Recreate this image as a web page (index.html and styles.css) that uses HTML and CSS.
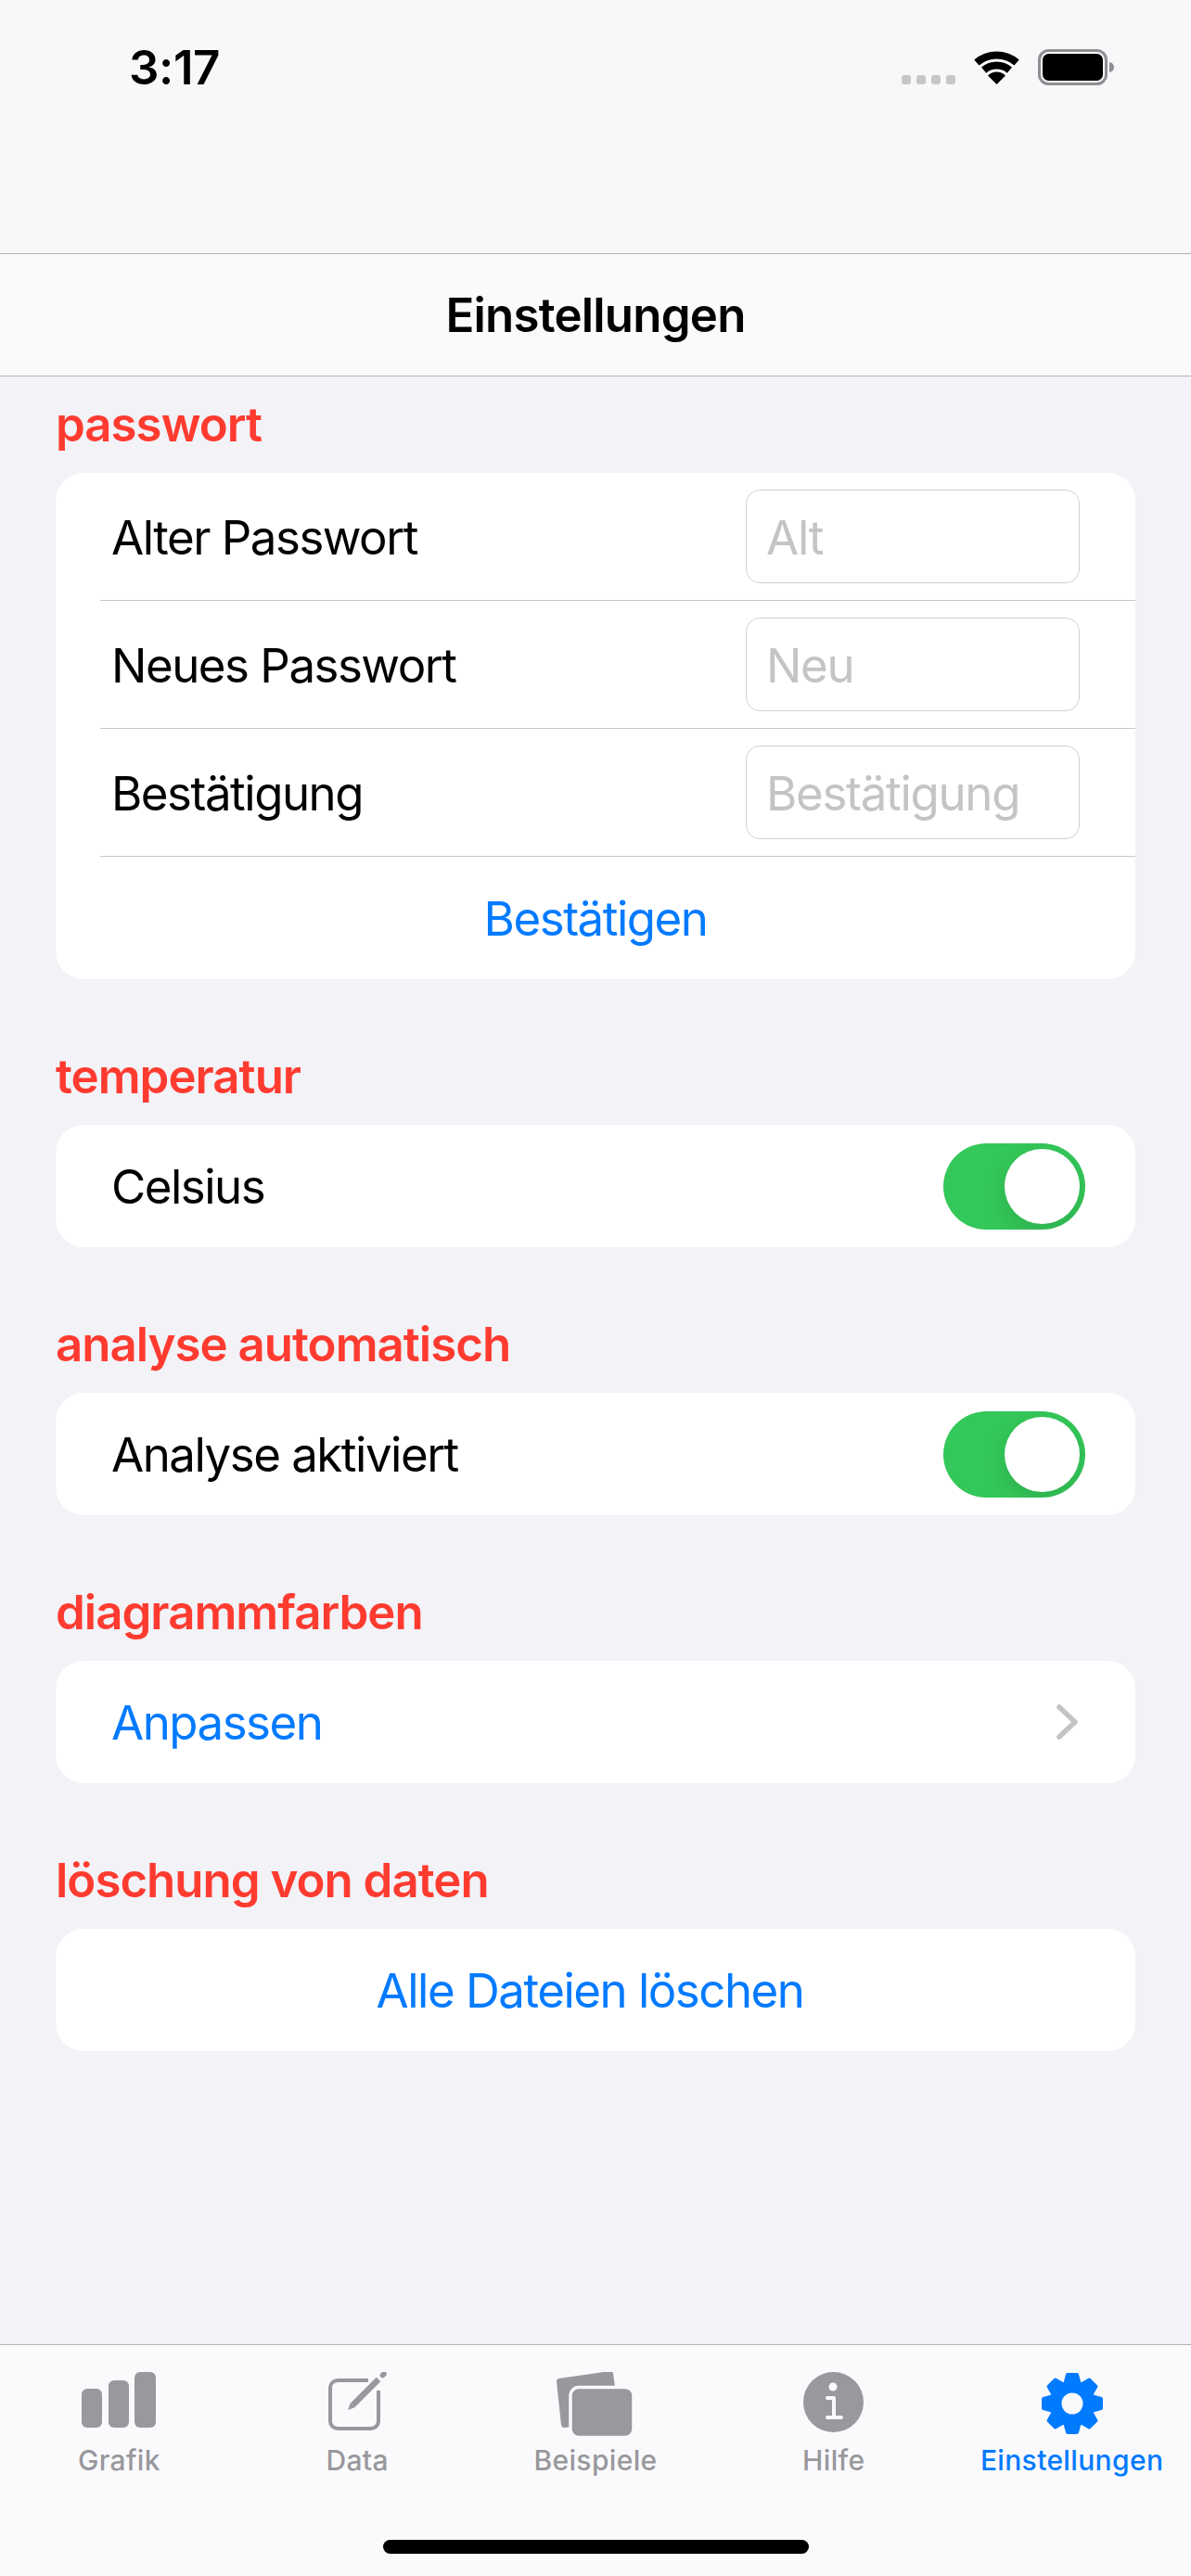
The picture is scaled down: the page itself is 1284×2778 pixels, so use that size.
FILE: index.html
```html
<!DOCTYPE html>
<html lang="de">

<head>
    <meta charset="UTF-8">
    <meta name="viewport" content="width=device-width, initial-scale=1.0">
    <title>Einstellungen</title>
    <link rel="stylesheet" href="styles.css">
</head>

<body>
    <div class="status-bar">
        <span class="time">3:17</span>
        <div class="status-icons">
            <div class="signal"><i></i><i></i><i></i><i></i></div>
            <svg class="wifi" width="51" height="37" viewBox="0 0 51 37">
                <path d="M3.9 13.6A33 33 0 0 1 47.1 13.6" fill="none" stroke="#000" stroke-width="8" />
                <path d="M11.6 21.6A21.5 21.5 0 0 1 39.4 21.6" fill="none" stroke="#000" stroke-width="8" />
                <path d="M25.5 37L16 27.5A13.5 13.5 0 0 1 35 27.5Z" fill="#000" />
            </svg>
            <svg class="battery" width="83" height="39" viewBox="0 0 83 39">
                <rect x="1.5" y="1.5" width="72" height="36" rx="10" fill="none" stroke="#8e8e93" stroke-width="3" />
                <rect x="5" y="5" width="65" height="29" rx="6.5" fill="#000" />
                <path d="M77 14C80 14.500 82 16.500 82 19.500C82 22.500 80 24.500 77 25Z" fill="#8e8e93" />
            </svg>
        </div>
    </div>

    <div class="nav-bar">Einstellungen</div>

    <main class="content">
        <section class="group">
            <h2>passwort</h2>
            <div class="card">
                <div class="row row-input">
                    <span>Alter Passwort</span>
                    <div class="field">Alt</div>
                </div>
                <div class="row row-input">
                    <span>Neues Passwort</span>
                    <div class="field">Neu</div>
                </div>
                <div class="row row-input">
                    <span>Bestätigung</span>
                    <div class="field">Bestätigung</div>
                </div>
                <div class="row row-center link">Bestätigen</div>
            </div>
        </section>

        <section class="group">
            <h2>temperatur</h2>
            <div class="card">
                <div class="row">
                    <span>Celsius</span>
                    <div class="toggle"><div class="knob"></div></div>
                </div>
            </div>
        </section>

        <section class="group">
            <h2>analyse automatisch</h2>
            <div class="card">
                <div class="row">
                    <span>Analyse aktiviert</span>
                    <div class="toggle"><div class="knob"></div></div>
                </div>
            </div>
        </section>

        <section class="group">
            <h2>diagrammfarben</h2>
            <div class="card">
                <div class="row link">
                    <span>Anpassen</span>
                    <svg class="chevron" width="23" height="38" viewBox="0 0 23 38">
                        <path d="M3 3L20 19L3 35" fill="none" stroke="#c4c4c6" stroke-width="5.500" stroke-linecap="round" stroke-linejoin="round" />
                    </svg>
                </div>
            </div>
        </section>

        <section class="group">
            <h2>löschung von daten</h2>
            <div class="card">
                <div class="row row-center row-offset link">Alle Dateien löschen</div>
            </div>
        </section>
    </main>

    <footer class="tab-bar">
        <nav class="tabs">
            <div class="tab">
                <div class="tab-icon">
                    <svg width="80" height="60" viewBox="0 0 80 60" fill="#98989d">
                        <rect x="0" y="18" width="22" height="42" rx="6" />
                        <rect x="29" y="9" width="22" height="51" rx="6" />
                        <rect x="57" y="0" width="23" height="60" rx="6" />
                    </svg>
                </div>
                <span>Grafik</span>
            </div>
            <div class="tab">
                <div class="tab-icon">
                    <svg width="63" height="63" viewBox="0 0 63 63">
                        <path d="M43 9H10A8 8 0 0 0 2 17V53A8 8 0 0 0 10 61H46A8 8 0 0 0 54 53V20" fill="none" stroke="#98989d" stroke-width="4" />
                        <path d="M21 41L24 33L29 38Z" fill="#98989d" />
                        <path d="M26.500 35.500L54 8" fill="none" stroke="#98989d" stroke-width="6.500" />
                        <path d="M58.500 3.500L60 2" fill="none" stroke="#98989d" stroke-width="5.500" stroke-linecap="round" />
                    </svg>
                </div>
                <span>Data</span>
            </div>
            <div class="tab">
                <div class="tab-icon">
                    <svg class="tab-icon-stack" width="84" height="70" viewBox="0 0 84 70">
                        <path d="M4 10L59 2L66 50L9 57Z" fill="#98989d" stroke="#98989d" stroke-width="6" stroke-linejoin="round" />
                        <rect x="16" y="16.500" width="68" height="54" rx="9" fill="#98989d" stroke="#fafafc" stroke-width="3.500" />
                    </svg>
                </div>
                <span>Beispiele</span>
            </div>
            <div class="tab">
                <div class="tab-icon">
                    <svg width="65" height="65" viewBox="0 0 65 65">
                        <circle cx="32.500" cy="32.500" r="32.500" fill="#98989d" />
                        <circle cx="32" cy="16" r="4.500" fill="#fafafc" />
                        <path d="M26 28H33V49M26 49H41" fill="none" stroke="#fafafc" stroke-width="4" stroke-linecap="round" stroke-linejoin="round" />
                    </svg>
                </div>
                <span>Hilfe</span>
            </div>
            <div class="tab active">
                <div class="tab-icon">
                    <svg width="68" height="68" viewBox="0 0 68 68" fill="#007aff">
                        <g stroke="#007aff" stroke-width="4" stroke-linejoin="round">
                            <path d="M29 3H39L42 14H26Z" />
                            <path d="M29 3H39L42 14H26Z" transform="rotate(45 34 34)" />
                            <path d="M29 3H39L42 14H26Z" transform="rotate(90 34 34)" />
                            <path d="M29 3H39L42 14H26Z" transform="rotate(135 34 34)" />
                            <path d="M29 3H39L42 14H26Z" transform="rotate(180 34 34)" />
                            <path d="M29 3H39L42 14H26Z" transform="rotate(225 34 34)" />
                            <path d="M29 3H39L42 14H26Z" transform="rotate(270 34 34)" />
                            <path d="M29 3H39L42 14H26Z" transform="rotate(315 34 34)" />
                        </g>
                        <circle cx="34" cy="34" r="25" />
                        <circle cx="34" cy="34" r="11.500" fill="#fafafc" />
                    </svg>
                </div>
                <span>Einstellungen</span>
            </div>
        </nav>
        <div class="home-indicator"></div>
    </footer>
</body>

</html>
```

FILE: styles.css
```css
* {
    box-sizing: border-box;
}

body {
    margin: 0;
    width: 1284px;
    height: 2778px;
    display: flex;
    flex-direction: column;
    background-color: #f2f2f7;
    color: #000;
    font-family: Inter, "Liberation Sans", sans-serif;
    font-size: 51px;
    letter-spacing: -1.5px;
}

.status-bar {
    height: 273px;
    flex: none;
    display: flex;
    justify-content: space-between;
    align-items: flex-start;
    padding: 53px 82px 0 139px;
    background-color: #f8f8fa;
}

.time {
    font-weight: 600;
    letter-spacing: -0.4px;
    line-height: 39px;
}

.status-icons {
    display: flex;
    align-items: flex-end;
}

.signal {
    display: flex;
    gap: 6px;
    margin-right: 19px;
    margin-bottom: 1px;
}

.signal i {
    width: 10px;
    height: 10px;
    border-radius: 3px;
    background-color: #c6c6c8;
}

.wifi {
    margin-right: 19px;
    margin-bottom: 1px;
}

.nav-bar {
    height: 133px;
    flex: none;
    display: flex;
    align-items: center;
    justify-content: center;
    background-color: #fafafc;
    border-top: 1px solid #b2b2b4;
    border-bottom: 1px solid #b2b2b4;
    font-weight: 600;
    letter-spacing: -0.8px;
}

.content {
    flex: 1;
    display: flex;
    flex-direction: column;
    gap: 51px;
    padding: 0 60px;
}

.group h2 {
    margin: 0;
    height: 106px;
    padding-top: 28px;
    color: #ff3b30;
    font-size: 51px;
    font-weight: 600;
    letter-spacing: -1px;
    line-height: 51px;
}

.group:first-child h2 {
    height: 104px;
    padding-top: 26px;
}

.card {
    background-color: #fff;
    border-radius: 30px;
    overflow: hidden;
}

.row {
    height: 132px;
    display: flex;
    justify-content: space-between;
    align-items: center;
    padding: 0 46px 0 60px;
}

.row-input {
    height: 138px;
    margin-left: 48px;
    padding: 0 60px 0 12px;
    border-bottom: 1px solid #c8c8ca;
}

.row-input span {
    padding-top: 2px;
}

.row-center {
    justify-content: center;
    padding: 0;
}

.row-offset {
    padding-right: 12px;
}

.link {
    color: #007aff;
}

.field {
    width: 360px;
    height: 101px;
    display: flex;
    align-items: center;
    padding: 2px 0 0 21px;
    border: 1px solid #d0d0d2;
    border-radius: 15px;
    color: #c4c4c6;
    letter-spacing: -1.3px;
}

.toggle {
    width: 153px;
    height: 93px;
    display: flex;
    justify-content: flex-end;
    align-items: center;
    padding-right: 6px;
    margin-right: 8px;
    border-radius: 47px;
    background-color: #34c759;
    overflow: hidden;
}

.knob {
    width: 81px;
    height: 81px;
    border-radius: 50%;
    background-color: #fff;
    box-shadow: 0 9px 24px rgba(0, 0, 0, 0.12);
}

.chevron {
    margin-right: 16px;
}

.tab-bar {
    height: 250px;
    flex: none;
    display: flex;
    flex-direction: column;
    align-items: center;
    background-color: #fafafc;
    border-top: 1px solid #b2b2b4;
}

.tabs {
    width: 100%;
    display: grid;
    grid-template-columns: repeat(5, 1fr);
}

.tab {
    display: flex;
    flex-direction: column;
    align-items: center;
    padding-top: 29px;
    color: #98989d;
    font-size: 30px;
    font-weight: 500;
    letter-spacing: 0.35px;
    line-height: 42px;
}

.tab.active {
    color: #007aff;
}

.tab-icon {
    height: 74px;
    display: flex;
    align-items: flex-start;
}

.tab-icon-stack {
    margin-left: -2px;
}

.home-indicator {
    width: 459px;
    height: 15px;
    margin-top: 65px;
    border-radius: 8px;
    background-color: #000;
}
```
